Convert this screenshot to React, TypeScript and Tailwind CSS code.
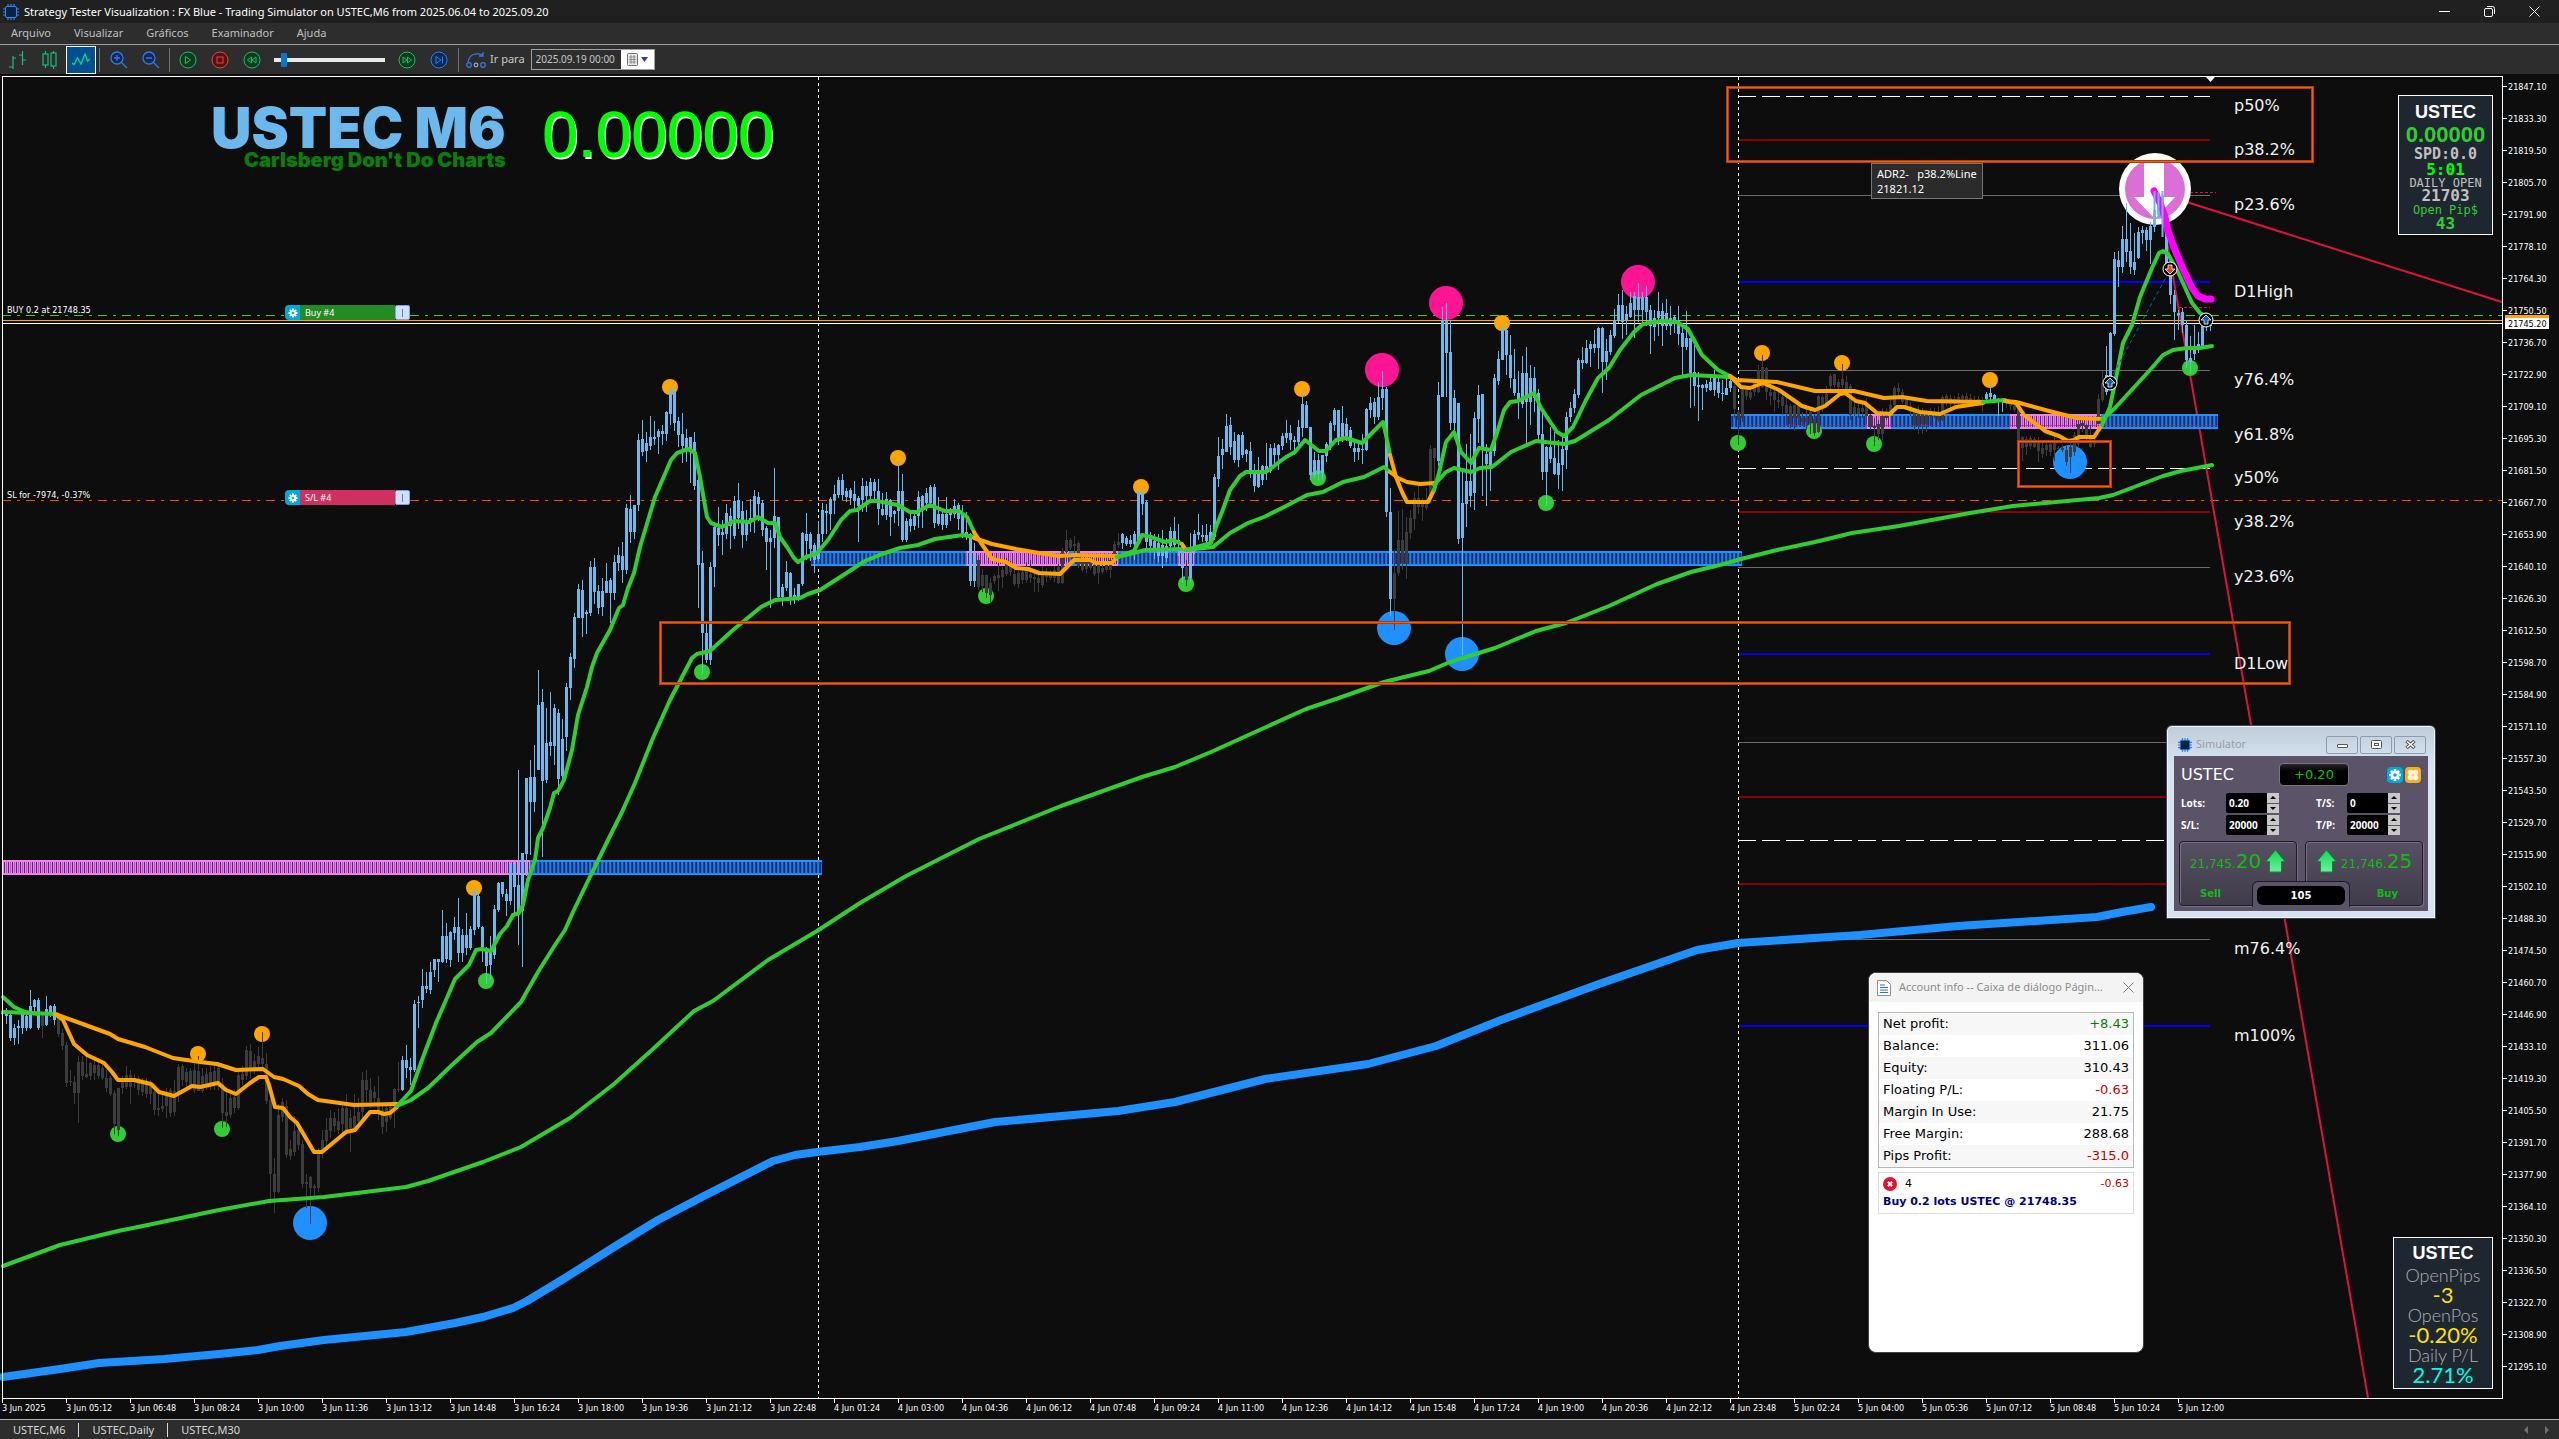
import { useState } from "react";
import type { ReactNode } from "react";

/* ---------- chart data ---------- */

type Tone = "up" | "flat";
type Run = { x: number; tone: Tone; bars: string };

// every bar is "high top bottom low", bars stand 4px apart
const runs: Run[] = [
  { x: 2, tone: "up", bars: "1012 1013 1014 1024,1008 1014 1016 1024,1014 1015 1038 1041,1024 1028 1038 1045,1020 1026 1028 1044,1012 1014 1028 1034,1012 1016 1028 1031,990 1006 1028 1029,999 1000 1007 1014,998 1000 1028 1030" },
  { x: 42, tone: "flat", bars: "1012 1013 1026 1038" },
  { x: 46, tone: "up", bars: "996 1009 1025 1026,1005 1006 1012 1017,1004 1006 1020 1025" },
  {
    x: 58,
    tone: "flat",
    bars: "1012 1015 1034 1037,1029 1033 1046 1050,1042 1045 1083 1087,1070 1081 1082 1086,1076 1082 1093 1104,1056 1062 1093 1123,1056 1062 1076 1080,1056 1074 1077 1078,1062 1063 1076 1080,1058 1065 1073 1080,1058 1065 1076 1079,1064 1068 1078 1080,1070 1078 1088 1092,1076 1078 1094 1096,1090 1093 1124 1134,1088 1088 1130 1136,1076 1082 1088 1094,1066 1075 1087 1089,1070 1075 1087 1104,1074 1078 1080 1088,1076 1078 1090 1095,1078 1082 1092 1096,1078 1082 1094 1098,1080 1084 1094 1104,1086 1092 1110 1115,1090 1108 1110 1116,1092 1106 1109 1112,1088 1094 1106 1118,1088 1090 1113 1117,1080 1091 1112 1116,1064 1067 1094 1102,1064 1066 1080 1086,1068 1072 1082 1088,1068 1071 1086 1089,1064 1070 1090 1093,1056 1071 1091 1091,1068 1076 1091 1093,1068 1074 1086 1090,1066 1072 1085 1090,1064 1071 1085 1090,1062 1068 1084 1090,1078 1084 1113 1128,1092 1112 1116 1127,1094 1098 1115 1118,1090 1097 1108 1113,1070 1075 1108 1110,1066 1074 1080 1085,1046 1050 1076 1080,1044 1051 1068 1078,1054 1061 1068 1074,1047 1056 1064 1070,1032 1058 1064 1070,1053 1064 1101 1104,1098 1100 1174 1204,1158 1174 1192 1213,1104 1115 1192 1193,1098 1102 1117 1122,1100 1106 1155 1158,1140 1149 1156 1160,1116 1131 1152 1156,1124 1130 1145 1150,1140 1144 1184 1188,1174 1182 1184 1208,1176 1177 1188 1224,1184 1186 1188 1198,1148 1152 1188 1192,1130 1140 1152 1158,1118 1130 1141 1146,1110 1118 1131 1138,1112 1118 1126 1132,1108 1121 1130 1134,1106 1108 1124 1134,1094 1108 1130 1133,1110 1118 1128 1152,1094 1116 1128 1131,1098 1112 1121 1126,1072 1080 1112 1118,1070 1080 1090 1105,1078 1090 1102 1108,1086 1092 1098 1106,1076 1098 1112 1120,1106 1110 1127 1134,1106 1108 1122 1132,1106 1107 1118 1120,1088 1089 1105 1128,1062 1089 1090 1092",
  },
  {
    x: 402,
    tone: "up",
    bars: "1056 1060 1090 1091,1045 1060 1068 1078,1058 1067 1070 1085,1000 1004 1070 1072,996 1002 1003 1028,969 986 1000 1008,972 986 989 993,962 972 990 994,959 959 970 977,959 959 962 982,910 936 962 963,923 936 959 963,931 932 960 967,917 927 933 940,898 927 953 962,929 935 953 962,913 935 948 955,926 929 948 950,888 890 930 935,893 896 927 929,926 927 947 962,947 951 966 984,936 952 965 980,905 909 955 959,882 883 910 912,882 882 894 897,889 894 901 916,863 864 901 905,862 864 887 914,770 885 912 945,853 853 911 967,778 778 854 876,760 777 802 855,745 777 802 812,670 705 770 770,689 702 781 857,708 743 780 783,692 742 746 756,704 708 746 765,709 713 779 795,719 739 776 780,683 687 737 751,653 657 688 700,613 617 659 668,584 589 618 618,580 590 618 637,610 612 614 634,561 567 613 616,558 567 592 604,585 591 608 614,578 591 607 616,563 581 593 593,578 580 593 623,555 562 593 600,547 555 563 571,542 556 570 583,504 508 570 574,495 509 532 543,505 505 532 539,434 440 505 511,420 439 452 456,432 443 451 462,416 437 446 450,421 437 439 445,429 431 437 454,425 431 434 445,411 412 434 441,385 390 414 425,387 391 423 431,417 421 435 447,413 434 446 463,429 438 448 462,437 437 450 483,432 442 486 490,470 480 565 608,551 563 633 674,622 633 660 663,562 567 660 665,524 527 567 587,507 528 535 546,520 532 535 555,504 513 534 539,508 516 526 549,496 501 536 539,483 500 518 529,501 511 535 548,510 521 535 541,499 518 521 532,490 496 520 533,492 497 504 521,500 503 530 536,526 528 542 570,530 538 542 608,468 516 538 548,517 517 597 600,584 587 597 606,561 572 588 591,572 573 597 605,588 595 598 604,584 584 598 601,532 533 584 586,513 534 541 560,532 534 549 561,543 545 560 573,521 534 559 561,503 510 534 542,504 511 513 534,497 499 514 530,485 494 500 514,477 480 495 498,474 480 495 500,488 491 497 502,488 490 498 505,481 494 501 510,496 498 506 542,478 486 500 512,481 486 496 512,478 482 496 500,479 482 491 500,479 491 509 525,493 509 515 516,492 499 515 520,499 500 517 536,510 511 514 523,460 491 511 526,474 491 540 542,518 521 540 542,514 519 526 532,510 516 526 530,491 497 516 528,495 496 510 528,488 493 503 511,485 487 503 506,484 487 523 528,497 514 524 526,512 514 525 530,497 514 525 528,508 513 515 521,499 506 514 518,503 505 519 530,505 515 533 538,512 532 534 540,533 534 581 586,543 555 581 587",
  },
  {
    x: 978,
    tone: "flat",
    bars: "555 560 587 590,569 575 586 592,575 575 593 598,578 583 595 602,574 576 581 584,563 575 578 591,567 570 577 588,558 563 574 576,561 565 572 576,569 574 584 586,571 573 584 588,568 572 580 584,562 568 580 583,560 574 578 583,570 577 579 592,572 578 583 592,566 574 585 588,568 574 577 582,570 574 578 580,566 570 578 582,564 567 583 584,548 551 583 584,530 540 552 562,538 540 548 550,536 544 546 555,541 543 566 568,560 561 570 572,558 562 569 573,556 560 568 570,560 565 574 576,556 564 573 584,562 568 572 574,556 562 570 572,554 560 570 578,541 544 562 564,533 542 545 548",
  },
  {
    x: 1122,
    tone: "up",
    bars: "533 534 543 549,536 538 544 546,535 540 544 547,531 534 544 560,490 491 540 545,489 493 504 515,500 502 542 548,532 535 546 553,534 541 548 559,534 543 556 562,530 545 556 568,538 546 558 562,527 531 546 552,517 531 545 548,524 540 544 556,543 545 568 583",
  },
  { x: 1186, tone: "flat", bars: "560 567 580 586" },
  {
    x: 1190,
    tone: "up",
    bars: "533 548 578 582,530 534 548 554,514 532 535 540,525 535 537 542,524 535 541 543,525 532 542 545,474 477 537 540,437 456 479 487,439 449 455 469,414 426 452 452,417 425 447 455,432 441 460 463,434 435 460 467,432 435 455 458,449 450 454 462,442 451 472 478,464 470 486 492,457 473 487 488,465 466 480 485,443 466 471 480,444 448 471 473,443 448 455 466,444 445 455 470,433 436 446 450,420 433 438 443,425 433 440 450,436 440 442 455,420 427 442 446,390 404 428 437,401 405 428 428,427 427 475 480,452 460 475 478,454 460 474 481,455 455 473 480,442 444 456 462,421 423 446 450,408 410 425 431,410 410 440 445,406 423 440 442,418 424 437 441,427 430 446 448,442 448 452 462,440 448 452 460,434 449 450 464,408 409 450 451,397 403 410 418,398 402 417 424,382 397 417 420,371 389 398 410,387 389 512 517,488 512 599 616",
  },
  { x: 1394, tone: "flat", bars: "550 573 599 630,511 540 573 576,509 540 563 570,517 532 564 579,510 518 533 539,492 498 519 530,486 498 507 514,498 504 507 521,488 502 508 510,445 449 500 503,448 448 458 484" },
  {
    x: 1438,
    tone: "up",
    bars: "382 395 461 466,307 320 397 397,303 321 353 397,320 352 423 430,390 398 423 430,403 403 539 544,468 503 538 655,444 481 504 527,434 481 496 507,412 418 493 510,385 395 419 443,394 394 450 496,444 454 464 506,446 452 466 491,374 378 451 456,351 359 381 385,324 328 360 360,328 330 355 375,335 355 378 388,349 379 393 396,371 393 400 419,356 373 404 408,347 373 402 444,365 378 402 425,367 378 398 412,389 393 435 440,412 434 472 480,446 447 472 506,427 447 459 463,432 458 474 475,440 463 475 489,435 449 465 491,412 417 450 469,402 408 417 422,389 394 408 413,358 360 395 398,347 360 363 369,340 348 363 364,341 344 349 367,330 344 348 353,327 328 348 369,327 328 362 393,339 351 362 380,330 335 352 355,309 320 336 338,294 305 321 323,290 305 322 339,306 314 320 335,292 303 317 318,292 296 310 338,283 297 310 322,292 297 310 326,286 297 312 326,305 310 326 354,310 318 327 341,292 311 318 336,303 311 326 346,299 313 326 330,306 318 326 335,315 317 324 333,306 320 334 345,326 333 347 375,311 338 347 350,338 338 373 408,345 372 386 406,372 385 387 421,384 385 388 410,380 384 388 392,376 382 390 391,370 378 390 396,378 382 393 398,380 393 394 401,378 388 395 395,378 381 388 392",
  },
  {
    x: 1734,
    tone: "flat",
    bars: "384 386 409 418,410 412 420 445,385 388 418 422,386 390 396 400,388 392 398 400,380 383 392 396,365 370 392 393,355 367 387 388,367 368 392 400,384 392 396 405,386 392 400 412,390 400 402 408,394 397 406 415,398 405 413 425,404 406 424 428,405 405 418 431,404 406 418 425,412 418 422 426,405 418 422 430,408 412 423 434,414 419 433 436,395 396 432 433,395 397 408 412,386 394 404 406,374 376 386 389,374 374 385 388,379 382 387 390,364 379 385 388,376 382 392 396,384 386 415 420,400 407 414 416,402 408 414 418,400 408 412 418,398 405 416 424,414 415 427 430,418 426 428 446,420 424 434 440,408 416 434 440,408 411 418 420,400 405 412 416,386 388 405 408,383 388 392 398,389 392 402 404,398 400 407 410,402 406 412 416,408 412 425 430,406 413 426 434,408 413 424 434,410 414 424 432,408 413 416 426,408 412 415 418,406 412 420 422,395 397 420 421,394 396 403 406,395 398 404 408,396 399 404 410,393 397 400 406,394 396 399 404,393 396 400 402,394 398 402 406,396 400 402 404,396 399 404 406,397 400 404 412",
  },
  { x: 1986, tone: "up", bars: "392 394 399 400,382 393 397 402,394 395 401 403,398 400 402 416,398 400 401 412" },
  {
    x: 2006,
    tone: "flat",
    bars: "398 400 402 408,402 404 406 410,404 406 410 412,406 408 440 446,436 437 448 461,436 439 447 455,436 438 446 449,437 439 447 448,437 440 451 462,442 448 454 458,441 445 450 456,440 444 452 456,434 443 450 461,446 448 449 450,445 448 450 452,446 450 462 466,444 447 457 473,432 435 452 456,418 424 444 448,420 423 426 432,424 425 436 440,425 436 447 448,436 440 444 447,394 399 424 424,371 383 400 402",
  },
  {
    x: 2106,
    tone: "up",
    bars: "346 375 392 395,332 333 379 382,252 259 334 336,251 260 267 287,226 239 267 273,203 239 252 262,223 251 267 274,233 262 270 275,227 232 258 259,226 230 233 244,227 230 240 251,222 226 240 264,190 210 227 232,192 193 215 218,191 195 213 237,213 219 265 268,262 275 295 304,290 295 312 340,310 313 315 330,308 312 325 333,320 325 360 368,336 358 362 373,325 346 354 360,332 344 346 353,325 326 346 349,318 322 326 331,322 325 326 331",
  },
];

const toneFill: Record<Tone, string> = { up: "#6cb8ec", flat: "#3c3c3c" };

const LIME = "#32cd32";
const ORANGE = "#ffa500";
const BLUE = "#1e90ff";
const PINK = "#ee82ee";

const averages: { color: string; points: string }[] = [
  { color: LIME, points: "3,997 14,1007 25,1012 38,1014" },
  { color: LIME, points: "3,1012 30,1013 55,1014" },
  { color: ORANGE, points: "55,1014 63,1020 74,1044 87,1055 104,1063 112,1072 118,1080 134,1080 151,1084 159,1092 174,1096 192,1086 200,1087 218,1083 226,1090 236,1094 250,1083 259,1077 266,1077 269,1085 275,1107 283,1108 290,1117 297,1123 314,1152 322,1152 346,1132 355,1130 370,1112 378,1112 384,1114 390,1113 397,1107" },
  { color: ORANGE, points: "55,1014 80,1023 110,1034 118,1039 145,1047 173,1058 200,1062 217,1064 236,1070 263,1069 274,1077 283,1079 299,1086 308,1094 318,1100 354,1105 397,1104" },
  { color: LIME, points: "397,1106 411,1091 422,1060 436,1023 446,1000 455,979 469,965 476,950 482,949 491,951 500,934 507,926 513,915 519,913 523,905 528,880 535,860 538,838 543,828 550,808 554,793 558,791 564,780 572,750 578,715 587,687 592,667 597,653 610,630 619,608 623,605 628,588 634,573 640,547 655,497 671,460 677,453 688,449 695,453 700,477 707,517 711,523 722,527 734,521 749,522 758,517 768,523 775,523 780,537 787,547 794,558 798,562 806,557 816,554 828,540 841,520 850,511 857,510 870,501 877,501 898,505 910,512 917,512 930,505 945,511 959,511 967,517 974,532" },
  { color: LIME, points: "397,1106 411,1100 428,1088 452,1065 477,1042 491,1033 521,1002 538,972 555,945 565,930 573,912 587,883 607,842 622,812 635,783 653,738 670,700 692,658 697,654 710,651 733,630 761,607 775,600 800,598 808,594 820,590 845,574 865,561 882,554 900,548 918,545 935,539 963,535 974,537" },
  { color: ORANGE, points: "974,532 981,543 992,559 1006,562 1016,568 1028,569 1039,573 1060,574 1074,560 1090,560 1096,563 1112,563 1117,557" },
  { color: ORANGE, points: "974,538 992,544 1016,549 1039,553 1059,556 1075,555 1117,556" },
  { color: LIME, points: "1117,557 1134,551 1142,535 1151,537 1165,542 1173,540 1182,544" },
  { color: LIME, points: "1117,557 1134,553 1145,550 1183,549" },
  { color: ORANGE, points: "1182,544 1186,550" },
  { color: LIME, points: "1186,550 1211,543 1216,527 1222,512 1230,490 1240,476 1246,472 1266,472 1286,457 1295,452 1305,440 1319,451 1326,451 1336,440 1346,438 1362,443 1370,435 1383,422 1386,435 1390,455" },
  { color: LIME, points: "1186,550 1213,547 1230,533 1248,523 1264,517 1286,506 1307,495 1323,492 1343,482 1364,477 1384,467 1390,472" },
  { color: ORANGE, points: "1390,455 1396,477 1402,492 1407,502 1428,502 1434,490" },
  { color: ORANGE, points: "1390,472 1398,478 1407,482 1420,484 1434,483" },
  { color: LIME, points: "1434,490 1439,473 1446,442 1454,432 1461,452 1471,463 1479,448 1491,450 1497,433 1504,410 1510,402 1518,401 1534,393 1541,408 1557,432 1564,436 1573,427 1586,400 1598,378 1609,368 1620,350 1634,332 1643,324 1661,321 1677,322 1688,329 1702,355 1718,370 1730,376" },
  { color: LIME, points: "1434,485 1446,472 1454,468 1471,472 1480,468 1492,467 1511,452 1536,441 1564,444 1575,441 1609,420 1641,395 1675,378 1691,375 1730,377" },
  { color: ORANGE, points: "1730,376 1741,387 1750,388 1763,383 1779,390 1802,406 1815,410 1825,406 1840,394 1845,393 1856,401 1865,403 1877,413 1890,414 1897,407 1904,407 1920,412 1940,414 1956,407 1983,403" },
  { color: ORANGE, points: "1730,376 1736,380 1777,382 1815,391 1854,391 1884,398 1902,397 1927,401 1983,402" },
  { color: LIME, points: "1983,402 2005,400" },
  { color: ORANGE, points: "2005,401 2016,403 2024,415 2045,431 2059,436 2068,441 2074,440 2079,437 2094,437 2102,425" },
  { color: ORANGE, points: "2005,401 2016,402 2049,411 2077,418 2102,419" },
  { color: LIME, points: "2102,425 2110,407 2117,373 2123,343 2132,325 2140,297 2152,268 2159,253 2163,251 2168,254 2177,270 2183,283 2192,303 2200,313 2207,317" },
  { color: LIME, points: "2102,420 2115,408 2150,370 2163,355 2173,350 2187,348 2200,348 2212,346" },
  { color: LIME, points: "3,1266 60,1245 118,1231 143,1226 219,1210 269,1201 324,1197 406,1187 428,1181 483,1162 521,1147 570,1118 614,1084 653,1049 694,1011 713,1001 768,960 817,931 860,903 906,876 979,839 1061,806 1142,777 1175,767 1211,752 1306,709 1336,699 1384,682 1429,671 1450,662 1466,657 1495,648 1536,631 1566,623 1609,606 1657,584 1691,572 1720,565 1741,559 1777,550 1815,542 1852,533 1899,526 1970,513 2013,506 2099,498 2113,495 2163,476 2181,471 2212,465" },
];

const slowAverage =
  "3,1377 60,1369 99,1363 164,1359 219,1354 258,1350 280,1346 324,1340 406,1332 455,1323 483,1317 513,1308 527,1301 565,1278 614,1247 658,1220 702,1197 773,1161 795,1155 817,1152 860,1147 898,1141 995,1122 1118,1111 1175,1102 1265,1079 1368,1064 1436,1046 1501,1020 1599,984 1697,950 1738,943 1860,935 1958,926 2097,917 2122,912 2151,907";

const dots: { r: number; fill: string; at: [number, number][] }[] = [
  { r: 8, fill: ORANGE, at: [[198, 1054], [262, 1034], [474, 888], [670, 387], [898, 458], [1141, 487], [1302, 389], [1502, 323], [1762, 353], [1842, 363], [1990, 380]] },
  { r: 8, fill: LIME, at: [[118, 1134], [222, 1129], [486, 981], [702, 672], [986, 596], [1186, 584], [1318, 478], [1546, 503], [1738, 443], [1814, 431], [1874, 444], [2190, 368]] },
  { r: 17, fill: "#ff1493", at: [[1382, 370], [1446, 303], [1638, 282]] },
  { r: 17, fill: BLUE, at: [[310, 1223], [1394, 628], [1462, 654], [2070, 462]] },
];

const levels: { y: number; kind: "white" | "maroon" | "gray" | "blue" }[] = [
  { y: 96, kind: "white" },
  { y: 139, kind: "maroon" },
  { y: 195, kind: "gray" },
  { y: 281, kind: "blue" },
  { y: 370, kind: "gray" },
  { y: 468, kind: "white" },
  { y: 511, kind: "maroon" },
  { y: 567, kind: "gray" },
  { y: 653, kind: "blue" },
  { y: 742, kind: "gray" },
  { y: 796, kind: "maroon" },
  { y: 840, kind: "white" },
  { y: 883, kind: "maroon" },
  { y: 939, kind: "gray" },
  { y: 1025, kind: "blue" },
];

const levelStyle = {
  white: { color: "#ffffff", h: 1, dash: "18 6" },
  maroon: { color: "#8b0000", h: 2, dash: undefined },
  gray: { color: "#696969", h: 1, dash: undefined },
  blue: { color: "#0000ff", h: 2, dash: undefined },
};

const levelLabels: [string, number][] = [
  ["p50%", 111],
  ["p38.2%", 155],
  ["p23.6%", 210],
  ["D1High", 297],
  ["y76.4%", 385],
  ["y61.8%", 440],
  ["y50%", 483],
  ["y38.2%", 527],
  ["y23.6%", 582],
  ["D1Low", 669],
  ["m76.4%", 954],
  ["m100%", 1041],
];

const bands = [
  { y: 860, parts: [[2, 530, "p"], [530, 822, "b"]] },
  { y: 551, parts: [[811, 966, "b"], [966, 1069, "p"], [1069, 1079, "b"], [1079, 1118, "p"], [1118, 1178, "b"], [1178, 1194, "p"], [1194, 1742, "b"]] },
  { y: 414, parts: [[1731, 1867, "b"], [1867, 1891, "p"], [1891, 2010, "b"], [2010, 2101, "p"], [2101, 2218, "b"]] },
] as { y: number; parts: [number, number, "p" | "b"][] }[];

const boxes = [
  { x: 1727, y: 87, w: 585, h: 74 },
  { x: 660, y: 622, w: 1629, h: 61 },
  { x: 2018, y: 441, w: 92, h: 45 },
];

const times = [
  "3 Jun 2025", "3 Jun 05:12", "3 Jun 06:48", "3 Jun 08:24", "3 Jun 10:00", "3 Jun 11:36", "3 Jun 13:12",
  "3 Jun 14:48", "3 Jun 16:24", "3 Jun 18:00", "3 Jun 19:36", "3 Jun 21:12", "3 Jun 22:48", "4 Jun 01:24",
  "4 Jun 03:00", "4 Jun 04:36", "4 Jun 06:12", "4 Jun 07:48", "4 Jun 09:24", "4 Jun 11:00", "4 Jun 12:36",
  "4 Jun 14:12", "4 Jun 15:48", "4 Jun 17:24", "4 Jun 19:00", "4 Jun 20:36", "4 Jun 22:12", "4 Jun 23:48",
  "5 Jun 02:24", "5 Jun 04:00", "5 Jun 05:36", "5 Jun 07:12", "5 Jun 08:48", "5 Jun 10:24", "5 Jun 12:00",
];

const prices = Array.from({ length: 41 }, (_, i) => (21847.1 - i * 13.8).toFixed(2));

/* ---------- chart ---------- */

function barPaths(tone: Tone) {
  let wicks = "";
  let bodies = "";
  for (const run of runs) {
    if (run.tone !== tone) continue;
    run.bars.split(",").forEach((bar, i) => {
      const [high, top, bottom, low] = bar.split(" ").map(Number);
      const x = run.x + i * 4;
      wicks += `M${x} ${high}h1V${low}h-1z`;
      bodies += `M${x - 1} ${top}h3V${Math.max(bottom, top + 1)}h-3z`;
    });
  }
  return wicks + bodies;
}

const barShapes = (["up", "flat"] as Tone[]).map((tone) => ({ tone, d: barPaths(tone) }));

function TradeMark({ x, y, sell }: { x: number; y: number; sell?: boolean }) {
  return (
    <g transform={`translate(${x} ${y})${sell ? " rotate(180)" : ""}`}>
      <circle r="7" fill="#000" stroke="#fff" />
      <path d="M0 -5L5 0H2V4H-2V0H-5Z" fill={sell ? "#e8401c" : "#0b5fb0"} stroke="#fff" strokeWidth=".8" />
    </g>
  );
}

function Chart() {
  return (
    <svg
      viewBox="0 74 2559 1345"
      className="block h-auto w-full font-['DejaVu_Sans_Condensed','DejaVu_Sans',sans-serif]"
      role="img"
      aria-label="USTEC M6 chart"
    >
      <defs>
        <pattern id="stripe-b" width="4" height="4" patternUnits="userSpaceOnUse">
          <rect width="4" height="4" fill="#1a72c8" />
          <rect width="1" height="4" fill="#10249a" />
          <rect x="2" width="1" height="4" fill="#1d8aa8" />
          <rect x="3" width="1" height="4" fill="#1440a8" />
        </pattern>
        <pattern id="stripe-p" width="4" height="4" patternUnits="userSpaceOnUse">
          <rect width="4" height="4" fill="#ee82ee" />
          <rect width="1" height="4" fill="#55208e" />
          <rect x="2" width="1" height="4" fill="#b05aa0" />
        </pattern>
      </defs>

      <g shapeRendering="crispEdges" fill="none">
        {levels.map(({ y, kind }) => {
          const s = levelStyle[kind];
          return (
            <path
              key={y}
              d={`M1738 ${y + s.h / 2}H2210`}
              stroke={s.color}
              strokeWidth={s.h}
              strokeDasharray={s.dash}
            />
          );
        })}
        <path d="M2 323.5H2502" stroke="#fff" />
        <path d="M2 315.5H2502" stroke="#32cd32" strokeDasharray="9 6 3 6" />
        <path d="M2 500.5H2502" stroke="#ff4500" strokeDasharray="9 6 3 6" />
        <path d="M818.5 77V1398M1738.5 77V1398" stroke="#fff" strokeDasharray="3 3" />
      </g>

      <g fill="none" stroke="#dc143c">
        <path d="M2155 192L2502 302M2158 190L2368 1398" strokeWidth="2" />
        <path d="M2190 192.500H2216M2179 307.500H2210" strokeDasharray="3 2" />
      </g>

      {bands.map(({ y, parts }) =>
        parts.map(([from, to, kind]) => (
          <g key={from} shapeRendering="crispEdges">
            <rect x={from} y={y} width={to - from} height="15" fill={kind === "p" ? PINK : BLUE} />
            <rect x={from} y={y + 2} width={to - from} height="11" fill={kind === "p" ? "url(#stripe-p)" : "url(#stripe-b)"} />
          </g>
        )),
      )}
      <path d="M1738 425.500H2218" stroke="#a0287a" strokeOpacity=".6" />

      {dots.map(({ r, fill, at }) =>
        at.map(([x, y]) => <circle key={`${x}-${y}`} cx={x} cy={y} r={r} fill={fill} />),
      )}
      <circle cx="2155" cy="189" r="36" fill="#fff" />
      <circle cx="2155" cy="189" r="30" fill="#da70d6" />
      <path d="M2144 158H2164V197H2175L2155 219L2134 197H2144Z" fill="#fff" />

      <path d="M2 320.500H2502" stroke="#ffa500" shapeRendering="crispEdges" />

      {barShapes.map(({ tone, d }) => (
        <path key={tone} d={d} fill={toneFill[tone]} shapeRendering="crispEdges" />
      ))}

      <g fill="none" strokeLinejoin="round" strokeLinecap="round">
        <polyline points={slowAverage} stroke={BLUE} strokeWidth="8" />
        <polyline
          points="2154,191 2160,203 2165,217 2168,231 2175,250 2183,269 2192,288 2198,296 2205,299 2211,299"
          stroke="#ff00ff"
          strokeWidth="7"
        />
        {averages.map(({ color, points }) => (
          <polyline key={points} points={points} stroke={color} strokeWidth="4" />
        ))}
        <path d="M2110 380L2170 270" stroke="#0b5fb0" strokeDasharray="3 4" />
      </g>
      <path d="M2154.500 191V227M2158.500 192V218M2162.500 191V237" stroke="#6cb8ec" strokeWidth="2" />

      {boxes.map(({ x, y, w, h }) => (
        <g key={x} fill="none" shapeRendering="crispEdges">
          <rect x={x + 0.5} y={y + 0.5} width={w} height={h} stroke="#b04008" strokeWidth="3" />
          <rect x={x + 0.5} y={y + 0.5} width={w} height={h} stroke="#ff5a0a" />
        </g>
      ))}

      <TradeMark x={2110} y={383} />
      <TradeMark x={2170} y={269} sell />
      <TradeMark x={2206} y={320} />
      <path d="M2206 77H2215L2210.500 82Z" fill="#fff" />

      <g className="font-['DejaVu_Sans',sans-serif] text-base" fill="#f2f2f2">
        {levelLabels.map(([label, y]) => (
          <text key={label} x="2234" y={y}>
            {label}
          </text>
        ))}
      </g>

      {/* frame and both axes */}
      <path d="M2.500 1398.500V76.500H2502.500V1398.500Z" fill="none" stroke="#fff" shapeRendering="crispEdges" />
      <g className="text-[9px]" fill="#fff">
        {prices.map((price, i) => (
          <g key={price}>
            <path d={`M2503 ${86.5 + i * 32}h4`} stroke="#fff" shapeRendering="crispEdges" />
            <text x="2508" y={90 + i * 32}>
              {price}
            </text>
          </g>
        ))}
        {times.map((time, i) => (
          <g key={time}>
            <path d={`M${2.5 + i * 64} 1399v4`} stroke="#fff" shapeRendering="crispEdges" />
            <text x={2 + i * 64} y="1411">
              {time}
            </text>
          </g>
        ))}
        <text x="7" y="313">BUY 0.2 at 21748.35</text>
        <text x="7" y="498">SL for -7974, -0.37%</text>
      </g>
      <rect x="2505" y="315" width="44" height="4" fill="#ffa500" />
      <rect x="2505" y="318" width="44" height="11" fill="#fff" />
      <text x="2508" y="327" fill="#000" className="text-[9px]">
        21745.20
      </text>
    </svg>
  );
}

/* ---------- icons ---------- */

function ChipIcon({ size }: { size: number }) {
  return (
    <svg width={size} height={size} viewBox="0 0 16 16" aria-hidden="true">
      <path d="M5 0v16M8 0v16M11 0v16M0 5h16M0 8h16M0 11h16" stroke="#2f86ff" strokeWidth="1.2" />
      <rect x="2.500" y="2.500" width="11" height="11" rx="1.500" fill="#04243f" stroke="#2f86ff" />
    </svg>
  );
}

function GearIcon({ size }: { size: number }) {
  return (
    <svg width={size} height={size} viewBox="0 0 16 16" aria-hidden="true">
      <path d="M8 2v12M2 8h12M3.800 3.800l8.400 8.400M12.200 3.800l-8.400 8.400" stroke="#fff" strokeWidth="2.600" />
      <circle cx="8" cy="8" r="4" fill="#fff" />
      <circle cx="8" cy="8" r="1.800" fill="#00a9dc" />
    </svg>
  );
}

function RoundIcon({ color, fill, children }: { color: string; fill: string; children: ReactNode }) {
  return (
    <svg width="18" height="18" viewBox="0 0 18 18" fill="none" stroke={color} aria-hidden="true">
      <circle cx="9" cy="9" r="8" fill={fill} />
      {children}
    </svg>
  );
}

/* ---------- header ---------- */

const menu = ["Arquivo", "Visualizar", "Gráficos", "Examinador", "Ajuda"];

function TitleBar() {
  return (
    <div className="flex h-[23px] items-center bg-[#202020] pl-[3px]">
      <ChipIcon size={16} />
      <h1 className="ml-[5px] text-[11px] leading-4 text-white">
        Strategy Tester Visualization : FX Blue - Trading Simulator on USTEC,M6 from 2025.06.04 to 2025.09.20
      </h1>
      <div className="ml-auto flex items-center gap-[34px] pr-[19px] text-white">
        <button type="button" aria-label="Minimize">
          <svg width="11" height="11" viewBox="0 0 11 11" fill="none" stroke="currentColor"><path d="M0 5.500h11" /></svg>
        </button>
        <button type="button" aria-label="Restore">
          <svg width="11" height="11" viewBox="0 0 11 11" fill="none" stroke="currentColor">
            <rect x=".5" y="2.500" width="8" height="8" rx="1.500" />
            <path d="M3 .5h5.500a2 2 0 0 1 2 2V8" />
          </svg>
        </button>
        <button type="button" aria-label="Close">
          <svg width="11" height="11" viewBox="0 0 11 11" fill="none" stroke="currentColor"><path d="M.5 .5l10 10M10.500 .5l-10 10" /></svg>
        </button>
      </div>
    </div>
  );
}

function ToolButton({ label, children }: { label: string; children: ReactNode }) {
  return (
    <button type="button" aria-label={label} className="flex h-7 w-8 items-center justify-center">
      {children}
    </button>
  );
}

function Toolbar() {
  const [speed, setSpeed] = useState(7);
  const [date, setDate] = useState("2025.09.19 00:00");

  return (
    <div className="flex h-[30px] items-center border-t border-[#a0a0a0] bg-[#2d2d2d] pl-[2px] text-[#c8c8c8]">
      <ToolButton label="Bars">
        <svg width="18" height="18" viewBox="0 0 18 18" fill="none" stroke="#12c07c" strokeWidth="1.200" aria-hidden="true">
          <path d="M4 5v13M4 7h3M0 16h4M13.500 0v14M10 4h3.500M13.500 9H17" />
        </svg>
      </ToolButton>
      <ToolButton label="Candles">
        <svg width="16" height="18" viewBox="0 0 16 18" fill="none" stroke="#12c07c" strokeWidth="1.200" aria-hidden="true">
          <path d="M3.500 0v3M3.500 14v3M11.500 0v2M11.500 15v3" />
          <rect x="1" y="3" width="5" height="11" />
          <rect x="9" y="2" width="5" height="13" />
        </svg>
      </ToolButton>
      <button type="button" aria-label="Line" aria-pressed="true" className="flex h-7 w-[30px] items-center justify-center border border-white bg-[#00508f]">
        <svg width="18" height="14" viewBox="0 0 18 14" fill="none" stroke="#12d08c" strokeWidth="1.400" aria-hidden="true">
          <path d="M0 10l2 1.500L5.500 5l3.500 6L13 1l2.500 7L18 6" />
        </svg>
      </button>
      <span className="mx-[3px] h-6 w-px bg-[#707070]" />
      <ToolButton label="Zoom in">
        <svg width="18" height="18" viewBox="0 0 18 18" fill="none" stroke="#3478e8" strokeWidth="1.300" aria-hidden="true">
          <circle cx="7" cy="7" r="6" fill="#0b2a55" />
          <path d="M11.500 11.500L17 17M4 7h6M7 4v6" />
        </svg>
      </ToolButton>
      <ToolButton label="Zoom out">
        <svg width="18" height="18" viewBox="0 0 18 18" fill="none" stroke="#3478e8" strokeWidth="1.300" aria-hidden="true">
          <circle cx="7" cy="7" r="6" fill="#0b2a55" />
          <path d="M11.500 11.500L17 17M4 7h6" />
        </svg>
      </ToolButton>
      <span className="ml-[2px] mr-[2px] h-6 w-px bg-[#707070]" />
      <ToolButton label="Play">
        <RoundIcon color="#16c060" fill="#0c3a20"><path d="M6.500 5.500v7l5-3.500z" /></RoundIcon>
      </ToolButton>
      <ToolButton label="Stop">
        <RoundIcon color="#f04438" fill="#4a1512"><rect x="6" y="6" width="6" height="6" /></RoundIcon>
      </ToolButton>
      <ToolButton label="Slower">
        <RoundIcon color="#16c060" fill="#0c3a20"><path d="M8.500 6v6l-4-3zM13 6v6L9 9z" /></RoundIcon>
      </ToolButton>
      <input
        type="range"
        aria-label="Speed"
        min={0}
        max={100}
        value={speed}
        onChange={(e) => setSpeed(Number(e.target.value))}
        className="mx-[6px] h-1 w-[111px] appearance-none bg-[#e7eaea] [&::-webkit-slider-thumb]:h-[14px] [&::-webkit-slider-thumb]:w-[6px] [&::-webkit-slider-thumb]:appearance-none [&::-webkit-slider-thumb]:bg-[#0078d7]"
      />
      <ToolButton label="Faster">
        <RoundIcon color="#16c060" fill="#0c3a20"><path d="M5 6v6l4-3zM9.500 6v6l4-3z" /></RoundIcon>
      </ToolButton>
      <ToolButton label="To end">
        <RoundIcon color="#2f7cf0" fill="#0b2a55"><path d="M6 5.500v7l5-3.500zM12.500 5.500v7" /></RoundIcon>
      </ToolButton>
      <span className="ml-[3px] mr-[7px] h-6 w-px bg-[#707070]" />
      <svg width="20" height="16" viewBox="0 0 20 16" fill="none" stroke="#3478e8" strokeWidth="1.300" aria-hidden="true">
        <path d="M2 10C3 3 9 0 17 3M17 0v4h-4" />
        <circle cx="3" cy="13" r="2.300" />
        <circle cx="10" cy="13" r="1.800" stroke="#9aa6b8" />
        <circle cx="17" cy="13" r="2.300" />
      </svg>
      <label htmlFor="goto" className="ml-1 text-[11px]">Ir para</label>
      <div className="ml-[6px] flex h-[21px] border border-[#a0a0a0]">
        <input
          id="goto"
          value={date}
          onChange={(e) => setDate(e.target.value)}
          className="w-[89px] bg-transparent pl-1 text-[10px] text-[#c8c8c8] outline-none"
        />
        <button type="button" aria-label="Pick a date" className="flex w-[33px] items-center justify-center gap-[2px] bg-white">
          <svg width="12" height="14" viewBox="0 0 12 14" fill="#e8e8e8" stroke="#707070" aria-hidden="true">
            <rect x=".5" y=".5" width="10" height="12" rx="1" />
            <path d="M2 4h7M2 6.500h7M2 9h7M4 2v9M7 2v9" strokeWidth=".7" />
          </svg>
          <svg width="7" height="5" viewBox="0 0 7 5" fill="#2c4a80" aria-hidden="true"><path d="M0 0h7L3.500 5z" /></svg>
        </button>
      </div>
    </div>
  );
}

/* ---------- overlays ---------- */

function OrderTag({ label, className }: { label: string; className: string }) {
  return (
    <div className="flex h-[15px] w-[125px] text-[9px] leading-[15px] text-white">
      <button type="button" aria-label={`${label} settings`} className="flex w-[15px] items-center justify-center rounded-l-sm bg-[#00a9dc]">
        <GearIcon size={12} />
      </button>
      <span className={`flex-1 pl-[5px] ${className}`}>{label}</span>
      <button type="button" aria-label={`Drag ${label}`} className="flex w-[15px] items-center justify-center rounded-xs border border-[#7f9fe0] bg-[#cfe0ff]">
        <span className="h-2 w-px bg-[#5f7fc8]" />
      </button>
    </div>
  );
}

function PricePanel() {
  return (
    <aside className="absolute right-[66px] top-[21px] flex w-[95px] flex-col items-center border border-white bg-[#1e2630] pb-[5px] pt-1 font-['DejaVu_Sans_Mono',monospace] font-bold">
      <p className="font-['Liberation_Sans',sans-serif] text-lg leading-6 text-white">USTEC</p>
      <p className="font-['Liberation_Sans',sans-serif] text-[22px] leading-[22px] text-[#32cd32]">0.00000</p>
      <p className="text-[15px] leading-4 text-[#c0c0c0]">SPD:0.0</p>
      <p className="text-base leading-4 text-[#00ff00]">5:01</p>
      <p className="text-xs font-normal leading-[11px] text-[#c0c0c0]">DAILY OPEN</p>
      <p className="text-base leading-[13px] text-[#c0c0c0]">21703</p>
      <p className="text-xs font-normal leading-4 text-[#32cd32]">Open Pip$</p>
      <p className="text-base leading-[11px] text-[#32cd32]">43</p>
    </aside>
  );
}

function ProfitPanel() {
  return (
    <aside className="absolute bottom-[30px] right-[66px] flex w-[100px] flex-col items-center border border-white bg-[#1e2630] py-[3px] font-['Lato',sans-serif] text-lg font-light leading-5 text-[#b0b0b0]">
      <p className="font-['Liberation_Sans',sans-serif] font-bold leading-6 text-white">USTEC</p>
      <p>OpenPips</p>
      <p className="text-[22px] font-normal text-[#ffe100]">-3</p>
      <p>OpenPos</p>
      <p className="text-[22px] font-normal text-[#ffe100]">-0.20%</p>
      <p>Daily P/L</p>
      <p className="text-[22px] font-normal text-[#00ffe0]">2.71%</p>
    </aside>
  );
}

const fields = [
  { id: "lots", label: "Lots:", value: "0.20" },
  { id: "ts", label: "T/S:", value: "0" },
  { id: "sl", label: "S/L:", value: "20000" },
  { id: "tp", label: "T/P:", value: "20000" },
];

function Field({ id, label, value }: { id: string; label: string; value: string }) {
  const [text, setText] = useState(value);
  return (
    <div className="flex h-5 items-center text-[10px] font-bold text-white">
      <label htmlFor={id} className={id === "ts" || id === "tp" ? "w-[31px]" : "w-[45px]"}>{label}</label>
      <input
        id={id}
        value={text}
        onChange={(e) => setText(e.target.value)}
        className="h-5 w-[41px] rounded-l-xs bg-black pl-[3px] text-white outline-none"
      />
      <span className="flex h-5 w-3 flex-col gap-px bg-[#5b5468]">
        <button type="button" aria-label={`${label} up`} className="flex flex-1 items-center justify-center bg-[#c8c8c8]">
          <svg width="6" height="3" viewBox="0 0 6 3" aria-hidden="true"><path d="M0 3h6L3 0z" /></svg>
        </button>
        <button type="button" aria-label={`${label} down`} className="flex flex-1 items-center justify-center bg-[#c8c8c8]">
          <svg width="6" height="3" viewBox="0 0 6 3" aria-hidden="true"><path d="M0 0h6L3 3z" /></svg>
        </button>
      </span>
    </div>
  );
}

function UpArrow() {
  return (
    <svg width="21" height="24" viewBox="0 0 21 24" aria-hidden="true">
      <defs>
        <linearGradient id="arrow" x2="0" y2="1">
          <stop offset="0" stopColor="#12d850" />
          <stop offset="1" stopColor="#6cf0a0" />
        </linearGradient>
      </defs>
      <path d="M10.500 1L20 12.500H16.500V23H4.500V12.500H1Z" fill="url(#arrow)" stroke="#0b8a34" strokeLinejoin="round" />
    </svg>
  );
}

const quoteCls =
  "flex h-[65px] flex-col justify-between rounded-sm border border-[#1d1a24] bg-linear-to-b from-[#575064] to-[#403c4a] shadow-[inset_1px_1px_0_#777088,1px_1px_0_#777088] text-[#0fbf0f] pt-[7px] pb-[3px]";

function SimulatorWindow() {
  return (
    <section className="absolute right-[123px] top-[651px] w-[270px] rounded-t-md border border-[#404850] bg-linear-to-b from-[#bfcdd9] to-[#d7e3f0] to-20% px-[7px] pb-[7px] shadow-[inset_0_0_0_1px_#eef4fa]">
      <header className="flex h-[30px] items-center pl-1 pt-[7px]">
        <ChipIcon size={14} />
        <h2 className="ml-1 text-[11px] text-[#989ea6]">Simulator</h2>
        <div className="ml-auto flex gap-[2px] pr-[2px] text-[#555]">
          <button type="button" aria-label="Minimize simulator" className="flex h-[18px] w-8 items-center justify-center rounded-xs border border-[#8c9cb4]">
            <svg width="11" height="9" viewBox="0 0 11 9" fill="#fff" stroke="currentColor"><rect x=".5" y="4.500" width="10" height="3" rx=".5" /></svg>
          </button>
          <button type="button" aria-label="Maximize simulator" className="flex h-[18px] w-8 items-center justify-center rounded-xs border border-[#8c9cb4]">
            <svg width="11" height="9" viewBox="0 0 11 9" fill="#fff" stroke="currentColor"><rect x=".5" y=".5" width="10" height="8" rx="1" /><rect x="3.500" y="3.500" width="4" height="2" /></svg>
          </button>
          <button type="button" aria-label="Close simulator" className="flex h-[18px] w-8 items-center justify-center rounded-xs border border-[#8c9cb4]">
            <svg width="11" height="9" viewBox="0 0 11 9" fill="none"><path d="M1.500 1l8 7M9.500 1l-8 7" stroke="currentColor" strokeWidth="3.400" /><path d="M2 1.500l7 6M9 1.500l-7 6" stroke="#fff" strokeWidth="1.400" /></svg>
          </button>
        </div>
      </header>

      <div className="relative bg-[#5b5468] px-[5px] pb-[5px] pt-[7px] font-['Noto_Sans',sans-serif]">
        <div className="flex h-[23px] items-center pl-[2px] pr-[2px]">
          <h3 className="w-[98px] font-['DejaVu_Sans',sans-serif] text-base leading-5 text-white">USTEC</h3>
          <output className="h-[23px] w-[70px] rounded-sm border border-[#777] bg-linear-to-b from-[#2b2b2b] to-black to-50% text-center font-['DejaVu_Sans',sans-serif] text-[13px] leading-[21px] text-[#00c800]">
            +0.20
          </output>
          <button type="button" aria-label="Settings" className="ml-auto rounded-sm bg-[#00a9dc]"><GearIcon size={16} /></button>
          <button type="button" aria-label="Layout" className="ml-[2px] rounded-sm bg-[#efb02c]">
            <svg width="16" height="16" viewBox="0 0 16 16" fill="#fff3d0" aria-hidden="true">
              <circle cx="5.500" cy="5.500" r="2.800" /><circle cx="10.500" cy="5.500" r="2.800" />
              <circle cx="5.500" cy="10.500" r="2.800" /><circle cx="10.500" cy="10.500" r="2.800" />
            </svg>
          </button>
        </div>
        <div className="mt-[7px] grid grid-cols-[135px_1fr] gap-y-[2px] pl-[2px]">
          {fields.map((f) => (
            <Field key={f.id} {...f} />
          ))}
        </div>
        <div className="mt-[6px] grid grid-cols-2 gap-2 font-['DejaVu_Sans',sans-serif]">
          <button type="button" className={quoteCls}>
            <span className="flex h-6 items-center justify-center self-center">
              <span className="mr-1 text-xs">21,745.<span className="text-xl leading-6">20</span></span>
              <UpArrow />
            </span>
            <span className="self-start pl-[20px] text-[10px] font-bold leading-4">Sell</span>
          </button>
          <button type="button" className={quoteCls}>
            <span className="flex h-6 items-center justify-center self-center">
              <UpArrow />
              <span className="ml-1 text-xs">21,746.<span className="text-xl leading-6">25</span></span>
            </span>
            <span className="self-end pr-[24px] text-[10px] font-bold leading-4">Buy</span>
          </button>
        </div>
        <div className="absolute bottom-[4px] left-1/2 -translate-x-1/2 rounded-t-md border-x border-t border-[#1d1a24] bg-[#5b5468] px-1 pb-[2px] pt-1">
          <output className="block h-[19px] w-[88px] rounded-md bg-black text-center font-['DejaVu_Sans',sans-serif] text-[10px] font-bold leading-[19px] text-white">
            105
          </output>
        </div>
      </div>
    </section>
  );
}

const account: [string, string, string][] = [
  ["Net profit:", "+8.43", "text-[#008000]"],
  ["Balance:", "311.06", "text-black"],
  ["Equity:", "310.43", "text-black"],
  ["Floating P/L:", "-0.63", "text-[#c00000]"],
  ["Margin In Use:", "21.75", "text-black"],
  ["Free Margin:", "288.68", "text-black"],
  ["Pips Profit:", "-315.0", "text-[#c00000]"],
];

function AccountDialog() {
  return (
    <section className="absolute right-[415px] top-[898px] h-[381px] w-[276px] overflow-hidden rounded-lg border border-[#444] bg-white">
      <header className="flex h-[29px] items-center bg-[#f3f3f3] pl-2 pr-[9px]">
        <svg width="14" height="16" viewBox="0 0 14 16" fill="#fff" stroke="#8a8f98" aria-hidden="true">
          <path d="M.5 .5h9l4 4v11H.5z" />
          <path d="M3 5h5M3 7.500h8M3 10h8M3 12.500h8" stroke="#2a6fc0" />
        </svg>
        <h2 className="ml-2 text-[11px] text-[#8c8c8c]">Account info -- Caixa de diálogo Págin...</h2>
        <button type="button" aria-label="Close account info" className="ml-auto text-[#777]">
          <svg width="11" height="11" viewBox="0 0 11 11" fill="none" stroke="currentColor"><path d="M.5 .5l10 10M10.500 .5l-10 10" /></svg>
        </button>
      </header>
      <div className="px-[9px] pt-[10px] font-['DejaVu_Sans',sans-serif] text-[13px] text-black">
        <table className="w-full border border-[#b8b8b8]">
          <tbody>
            {account.map(([name, value, color]) => (
              <tr key={name} className="h-[22px] odd:bg-[#f7f7f7]">
                <th scope="row" className="p-0 pl-1 text-left font-normal leading-[22px]">{name}</th>
                <td className={`p-0 pr-1 text-right leading-[22px] ${color}`}>{value}</td>
              </tr>
            ))}
          </tbody>
        </table>
        <div className="mt-1 border border-[#dcdcdc] px-1 py-[2px] text-[11px]">
          <div className="flex h-[18px] items-center">
            <button type="button" aria-label="Close order 4">
              <svg width="14" height="14" viewBox="0 0 14 14" aria-hidden="true">
                <circle cx="7" cy="7" r="7" fill="#e8112d" />
                <path d="M4.800 4.800l4.400 4.400M9.200 4.800l-4.400 4.400" stroke="#fff" strokeWidth="2" />
              </svg>
            </button>
            <span className="ml-2">4</span>
            <span className="ml-auto text-[#c00000]">-0.63</span>
          </div>
          <p className="whitespace-nowrap font-bold leading-[18px] text-[#000080]">Buy 0.2 lots USTEC @ 21748.35</p>
        </div>
      </div>
    </section>
  );
}

const tabs = ["USTEC,M6", "USTEC,Daily", "USTEC,M30"];

export default function App() {
  return (
    <div className="flex min-h-screen flex-col bg-[#0d0d0d] font-['Noto_Sans',sans-serif]">
      <TitleBar />
      <nav className="flex h-[21px] items-center gap-[23px] bg-[#2d2d2d] pl-[11px] text-[11px] text-[#c0c0c0]">
        {menu.map((item) => (
          <button key={item} type="button">{item}</button>
        ))}
      </nav>
      <Toolbar />

      <main className="relative flex-1">
        <Chart />
        <div className="absolute left-[211px] top-[32px] text-right">
          <p className="font-['Inter',sans-serif] text-[56px] font-black leading-[44px] text-[#6cb8ec]">USTEC M6</p>
          <p className="font-['Inter',sans-serif] text-xl font-black leading-5 text-[#0a7d0a]">Carlsberg Don&apos;t Do Charts</p>
        </div>
        <p className="absolute left-[542px] top-[29px] font-['Liberation_Sans',sans-serif] text-[64px] leading-[64px] text-[#00ff00] [text-shadow:1px_0_0_#00ff00,2px_2px_0_#fff]">
          0.00000
        </p>
        <div className="absolute left-[285px] top-[231px]">
          <OrderTag label="Buy #4" className="bg-[#228b22]" />
        </div>
        <div className="absolute left-[285px] top-[416px]">
          <OrderTag label="S/L #4" className="bg-[#d03060]" />
        </div>
        <div role="tooltip" className="absolute left-[1871px] top-[89px] whitespace-pre border border-[#767676] bg-[#2b2b2b] px-[5px] py-[2px] text-[11px] leading-[15px] text-white">
          {"ADR2-   p38.2%Line\n21821.12"}
        </div>
        <PricePanel />
        <ProfitPanel />
        <SimulatorWindow />
        <AccountDialog />
      </main>

      <footer className="flex h-5 items-center border-t border-[#b0b0b0] bg-[#2d2d2d] pr-[9px] text-[11px] text-[#d8d8d8]">
        {tabs.map((tab) => (
          <button key={tab} type="button" className="border-r border-[#d8d8d8] px-[13px] leading-[14px] last-of-type:border-r-0">
            {tab}
          </button>
        ))}
        <svg width="26" height="8" viewBox="0 0 26 8" fill="#707070" className="ml-auto" aria-hidden="true">
          <path d="M4 0v8L0 4zM21 0v8l4-4z" />
        </svg>
      </footer>
    </div>
  );
}
